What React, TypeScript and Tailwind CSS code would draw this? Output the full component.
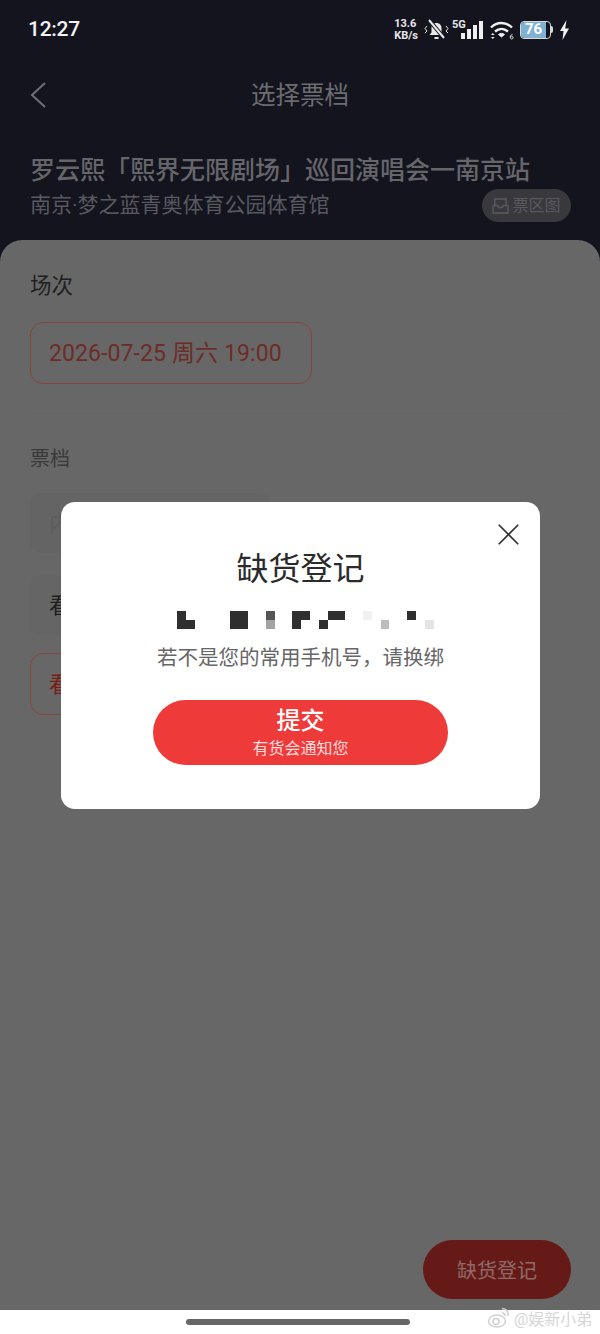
import { X } from "lucide-react";

const cjk = "font-['Roboto','Noto_Sans_CJK_SC',sans-serif]";

// mosaic over the phone number: column, row, colour on a 29x2 grid
const mosaic: [number, number, string][] = [
  [1, 1, "#2f2f2f"],
  [1, 2, "#2f2f2f"],
  [2, 2, "#2f2f2f"],
  [7, 1, "#2f2f2f"],
  [8, 1, "#2f2f2f"],
  [7, 2, "#2f2f2f"],
  [8, 2, "#2f2f2f"],
  [11, 1, "#555555"],
  [11, 2, "#a3a3a3"],
  [14, 1, "#2f2f2f"],
  [15, 1, "#2f2f2f"],
  [14, 2, "#2f2f2f"],
  [17, 2, "#2f2f2f"],
  [18, 1, "#2f2f2f"],
  [19, 1, "#2f2f2f"],
  [22, 1, "#f1f1f1"],
  [24, 2, "#bcbcbc"],
  [27, 1, "#2f2f2f"],
  [29, 2, "#e4e4e4"],
];

function StatusIcons() {
  return (
    <div className="flex items-center mt-[1px]">
      <div className="flex flex-col items-start text-[11px] leading-[12px] font-bold text-[#e8e8e8]">
        <span>13.6</span>
        <span>KB/s</span>
      </div>
      <svg width="25" height="22" viewBox="0 0 25 22" fill="none" stroke="#e8e8e8" className="ml-[6px]">
        <path d="M12.500 4c-3 0-5 2.200-5 5.200v4.300l-2 2.500h14l-2-2.500V9.200c0-3-2-5.200-5-5.200z" fill="#e8e8e8" stroke="none" />
        <path d="M10.500 19h4" strokeWidth="2" />
        <path d="M5 1l15 18" stroke="#14141f" strokeWidth="4" />
        <path d="M5 1l15 18" strokeWidth="2" />
        <path d="M3 7L1 9.500 3 12l-2 2M22 7l2 2.500-2 2.500 2 2" strokeWidth="1" />
      </svg>
      <div className="relative w-[31px] h-[22px] ml-[3px]">
        <span className="absolute left-0 top-0 text-[11px] leading-[12px] font-bold text-[#e8e8e8]">5G</span>
        <div className="absolute right-0 bottom-[2px] flex items-end gap-[2px]">
          <div className="w-[4px] h-[6px] bg-[#f0f0f0]" />
          <div className="w-[4px] h-[10px] bg-[#f0f0f0]" />
          <div className="w-[4px] h-[14px] bg-[#f0f0f0]" />
          <div className="w-[4px] h-[18px] bg-[#f0f0f0]" />
        </div>
      </div>
      <svg width="25" height="20" viewBox="0 0 25 20" fill="none" stroke="#f0f0f0" className="ml-[6px]">
        <path d="M2 7.500c6-6 15-6 21 0" strokeWidth="2.400" />
        <path d="M6 11.500c4-3.500 9-3.500 13 0" strokeWidth="2.400" />
        <path d="M9.500 14.500c2-1.500 4-1.500 6 0l-3 2.500z" fill="#f0f0f0" strokeWidth="1" />
        <path d="M2 15l1.800-2 1.800 2zM2 17l1.800 2 1.800-2z" fill="#f0f0f0" stroke="none" />
        <path d="M23.500 14.500c-1.500 0-2.200 1.200-2.200 2.700 0 1 .5 1.800 1.400 1.800s1.400-.7 1.400-1.400-.5-1.300-1.300-1.300-1.500.5-1.500 1" strokeWidth="0.900" />
      </svg>
      <div className="flex items-center ml-[6px]">
        <div className="w-[31px] h-[18px] rounded-[4px] border border-[#d8d8d8] overflow-hidden flex">
          <div className="w-[25px] bg-[#7fb2d2] flex items-center justify-center text-[15px] font-bold text-white leading-none">
            76
          </div>
        </div>
        <div className="w-[2px] h-[7px] bg-[#d8d8d8] rounded-r-sm" />
      </div>
      <svg width="9" height="20" viewBox="0 0 9 20" className="ml-[7px]">
        <path d="M6.500 0L0 11h3.500L2.500 20 9 8.500H5.200z" fill="#f0f0f0" />
      </svg>
    </div>
  );
}

export default function App() {
  return (
    <div className={`relative w-[600px] h-[1334px] overflow-hidden bg-white ${cjk}`}>
      <div className="h-[1310px] flex flex-col bg-[#14141f]">
        <div className="h-[58px] shrink-0 flex items-center justify-between pl-[28px] pr-[31px]">
          <span className="text-[21px] tracking-[-0.3px] font-medium text-[#f2f2f2] mt-[2px]">12:27</span>
          <StatusIcons />
        </div>

        <div className="relative h-[74px] shrink-0 flex items-center justify-center">
          <svg width="16" height="26" viewBox="0 0 16 26" fill="none" stroke="#6f6f75" strokeWidth="2" className="absolute left-[30px] top-[24px]">
            <path d="M15 1L2 13l13 12" />
          </svg>
          <span className="text-[24.500px] text-[#6c6c70] mt-[2px]">选择票档</span>
        </div>

        <div className="pl-[30px] pr-[29px] h-[108px] shrink-0">
          <div className="text-[25px] leading-[32px] mt-[23px] font-medium text-[#66666a] whitespace-nowrap">
            罗云熙「熙界无限剧场」巡回演唱会一南京站
          </div>
          <div className="flex items-center justify-between h-[37px]">
            <span className="text-[21px] text-[#59595f]">南京·梦之蓝青奥体育公园体育馆</span>
            <div className="w-[89px] h-[33px] rounded-full bg-[#38383d] flex items-center justify-center gap-[3px] text-[16px] text-[#59595f]">
              <svg width="17" height="16" viewBox="0 0 18 17" fill="none" stroke="#59595f" strokeWidth="1.500">
                <path d="M1 8v8h16V8M3 8V1h12v7M1 8h5c0 3 6 3 6 0h5" />
              </svg>
              <span>票区图</span>
            </div>
          </div>
        </div>

        <div className="flex-1 bg-[#676767] rounded-t-[22px] px-[30px] flex flex-col">
          <div className="text-[21.500px] leading-[30px] text-[#1f1f1f] mt-[31px]">场次</div>
          <div className="mt-[21px] w-[282px] h-[62px] border border-[#84453e] rounded-[13px] flex items-center pl-[18px] pt-[2px] text-[23px] tracking-[0.1px] text-[#6e2c28]">
            2026-07-25 周六 19:00
          </div>
          <div className="h-px bg-[#656565] mt-[29px] -mr-[2px]" />
          <div className="text-[20px] leading-[30px] text-[#3a3a3a] mt-[30px]">票档</div>
          <div className="mt-[19px] w-[240px] h-[60px] bg-[#646464] rounded-[10px] flex items-center pl-[19px] text-[22px] text-[#5c5c5c]">
            内
          </div>
          <div className="mt-[22px] w-[240px] h-[60px] bg-[#656565] rounded-[10px] flex items-center pl-[19px] text-[22px] text-[#1f1f1f]">
            看
          </div>
          <div className="mt-[18px] w-[240px] h-[62px] border border-[#84453e] rounded-[13px] flex items-center pl-[18px] text-[22px] text-[#7a1d16]">
            看
          </div>
          <div className="mt-auto mb-[11px] self-end -mr-[1px] w-[148px] h-[59px] rounded-full bg-[#651a18] flex items-center justify-center pt-[2px] text-[20px] text-[#8f6a68]">
            缺货登记
          </div>
        </div>
      </div>

      {/* gesture bar + watermark */}
      <div className="absolute left-[186px] top-[1319px] w-[224px] h-[6px] rounded-full bg-[#676767]" />
      <div className="absolute left-[487px] top-[1306px]">
        <svg width="24" height="24" viewBox="0 0 24 24" fill="none" stroke="#d0d0d0" strokeWidth="1.500">
          <ellipse cx="10" cy="15" rx="8.500" ry="6" />
          <circle cx="9" cy="15.500" r="3" />
          <path d="M15 3c3-1 7 2 6 7M15 7c2 0 3 1 3 3" />
        </svg>
      </div>
      <div className="absolute left-[514px] top-[1308px] text-[16px] leading-[24px] text-[#d6d6d6] whitespace-nowrap">@娱新小弟</div>

      {/* dialog */}
      <div className="absolute left-[61px] top-[502px] w-[479px] h-[307px] rounded-[14px] bg-white flex flex-col items-center">
        <X className="absolute right-[13px] top-[14px] text-[#333333]" size={37} strokeWidth={1.100} />
        <div className="mt-[43px] text-[32px] leading-[48px] text-[#2b2b2b]">缺货登记</div>
        <div className="mt-[18px] ml-[10px] grid grid-cols-[repeat(29,8.840px)] grid-rows-[repeat(2,9px)]">
          {mosaic.map(([gridColumn, gridRow, background], i) => (
            <div key={i} style={{ gridColumn, gridRow, background }} />
          ))}
        </div>
        <div className="mt-[13px] text-[20.500px] leading-[32px] text-[#666666]">若不是您的常用手机号，请换绑</div>
        <div className="mt-[26px] w-[295px] h-[65px] rounded-full bg-[#ef3a3a] flex flex-col items-center justify-center pt-[2px] text-white">
          <span className="text-[24px] leading-[30px] font-medium">提交</span>
          <span className="text-[16px] leading-[24px] mt-[1px] text-[#fbdcdc]">有货会通知您</span>
        </div>
      </div>
    </div>
  );
}
